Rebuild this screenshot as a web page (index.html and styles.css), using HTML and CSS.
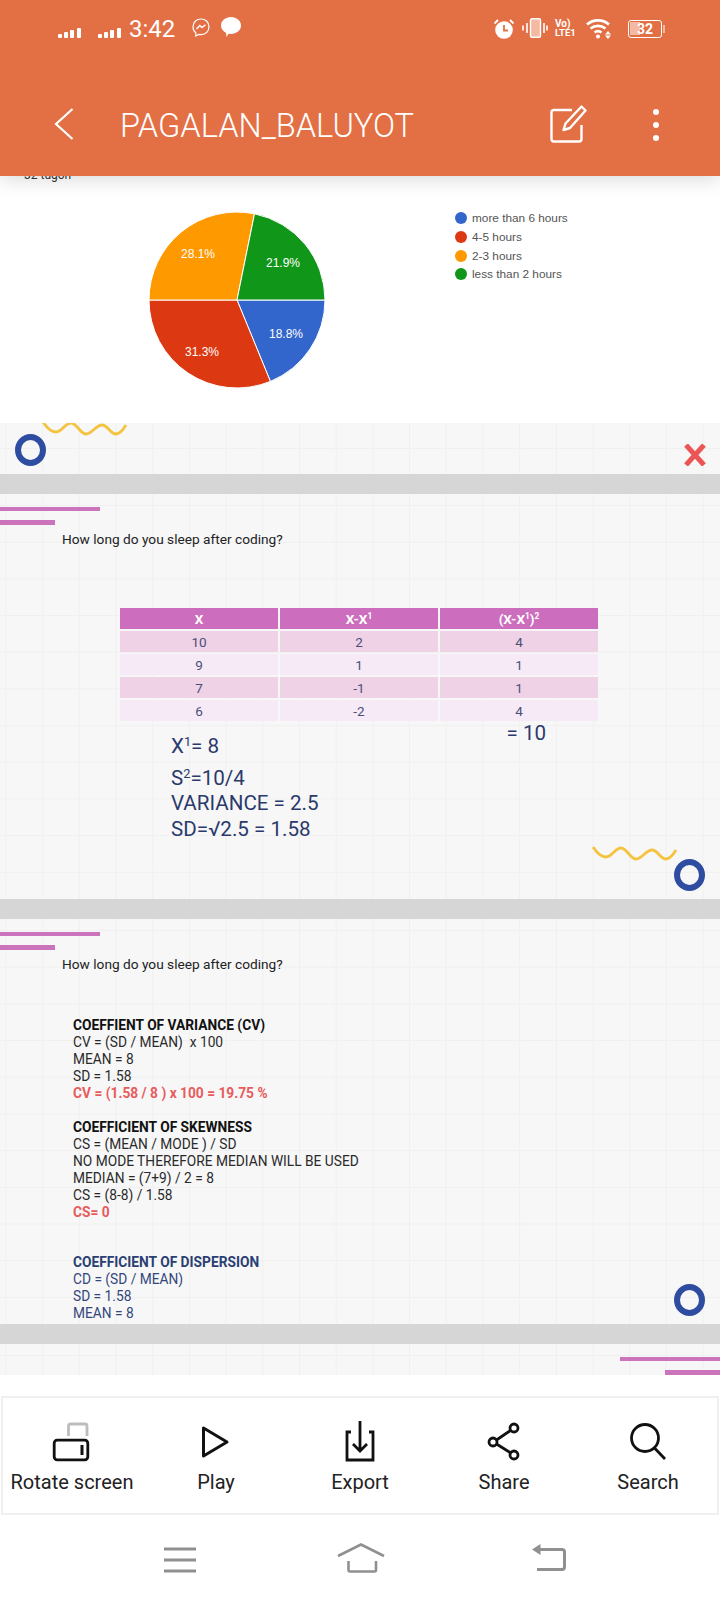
FILE: index.html
```html
<!DOCTYPE html>
<html lang="en">

<head>
    <title>PAGALAN_BALUYOT</title>
    <link rel="stylesheet" href="styles.css">
</head>

<body>
    <!-- Orange top bar -->
    <header class="topbar">
        <div class="status">
            <svg class="signal" width="24" height="10" viewBox="0 0 24 10"><rect x="0" y="6" width="4" height="4" rx="1"/><rect x="6" y="4" width="4" height="6" rx="1"/><rect x="12" y="2" width="4" height="8" rx="1"/><rect x="19" y="0" width="4" height="10" rx="1"/></svg>
            <svg class="signal signal-two" width="24" height="10" viewBox="0 0 24 10"><rect x="0" y="6" width="4" height="4" rx="1"/><rect x="6" y="4" width="4" height="6" rx="1"/><rect x="12" y="2" width="4" height="8" rx="1"/><rect x="19" y="0" width="4" height="10" rx="1"/></svg>
            <span class="clock">3:42</span>
            <svg class="messenger" width="18" height="20" viewBox="0 0 18 20" fill="none" stroke="#fff" stroke-width="1.2"><path d="M9 1 C4.300 1 1 4.400 1 8.800 C1 11.300 2 13.400 3.800 14.800 V18 L6.600 16.400 C7.400 16.600 8.200 16.700 9 16.700 C13.700 16.700 17 13.200 17 8.800 C17 4.400 13.700 1 9 1 Z"/><path d="M4.500 11 L7.800 7.500 L10 9.500 L13.500 6.800" stroke-width="1.400"/></svg>
            <svg class="bubble" width="20" height="20" viewBox="0 0 20 20"><path d="M10 0 C15.500 0 20 3.600 20 8.500 C20 13.400 15.500 17 10 17 L7.500 16.800 L5.500 20 L5 15.800 C2 14.400 0 11.800 0 8.500 C0 3.600 4.500 0 10 0 Z" fill="#fff"/></svg>

            <svg class="alarm" width="22" height="22" viewBox="0 0 22 22"><circle cx="11" cy="12" r="8.800" fill="#fff"/><path d="M11 7 V12.500 H15" fill="none" stroke="#e36f45" stroke-width="1.800"/><path d="M1.500 5.500 L5 2 M20.500 5.500 L17 2" stroke="#fff" stroke-width="1.800"/></svg>
            <svg class="vibrate" width="26" height="20" viewBox="0 0 26 20" fill="none" stroke="#fff"><rect x="8.500" y="0.700" width="10" height="18.600" rx="1.500" fill="#f3b9a3" stroke-width="1.400"/><path d="M5 5 V15 M1 7.500 V12.500 M22 5 V15 M25 7.500 V12.500" stroke-width="1.600"/></svg>
            <span class="volte"><span class="volte-top">Vo)</span><span class="volte-bottom">LTE1</span></span>
            <svg class="wifi" width="26" height="21" viewBox="0 0 26 21" fill="none" stroke="#fff" stroke-width="2.600"><path d="M1 6.500 C7 1 17 1 23 6.500"/><path d="M4.500 10.500 C9 7 15 7 19.500 10.500"/><path d="M8.500 14.500 C10.500 13 13.500 13 15.500 14.500"/><circle cx="12" cy="18.500" r="2" fill="#fff" stroke="none"/><path d="M22 13 L25 16.500 H19 Z M22 21 L19 17.500 H25 Z" fill="#fff" stroke="none"/></svg>
            <span class="battery"><span class="battery-fill"></span><span class="battery-text">32</span></span>
            <span class="battery-tip"></span>
        </div>
        <div class="titlebar">
            <svg class="back" width="20" height="32" viewBox="0 0 20 32" fill="none" stroke="#fff" stroke-width="2.200"><path d="M18.500 1 L2 16 L18.500 31"/></svg>
            <h1 class="title">PAGALAN_BALUYOT</h1>
            <svg class="edit" width="37" height="38" viewBox="0 0 37 38" fill="none" stroke="#fff" stroke-width="2.400" stroke-linejoin="round"><path d="M22 5 H4 Q1.500 5 1.500 7.500 V34 Q1.500 36.500 4 36.500 H29 Q31.500 36.500 31.500 34 V20"/><path d="M31.500 1.500 L35.500 5.500 L20 23 L13.500 25 L15.500 18.500 Z"/></svg>
            <span class="dots"><span class="dot"></span><span class="dot"></span><span class="dot"></span></span>
        </div>
    </header>

    <!-- Pie chart card -->
    <section class="chart">
        <div class="answers">32 tugon</div>
        <div class="chart-row">
            <svg class="pie" width="176" height="176" viewBox="-88 -88 176 176">
                <g stroke="#fff" stroke-width="1">
                    <path d="M0 0 L88 0 A88 88 0 0 1 33.400 81.400 Z" fill="#3366cc"/>
                    <path d="M0 0 L33.400 81.400 A88 88 0 0 1 -88 0 Z" fill="#dc3912"/>
                    <path d="M0 0 L-88 0 A88 88 0 0 1 17.500 -86.200 Z" fill="#ff9900"/>
                    <path d="M0 0 L17.500 -86.200 A88 88 0 0 1 88 0 Z" fill="#109618"/>
                </g>
                <g class="pie-labels" text-anchor="middle">
                    <text x="-39" y="-42">28.1%</text>
                    <text x="46" y="-33">21.9%</text>
                    <text x="49" y="38">18.8%</text>
                    <text x="-35" y="56">31.3%</text>
                </g>
            </svg>
            <ul class="legend">
                <li class="legend-item"><span class="swatch blue"></span>more than 6 hours</li>
                <li class="legend-item"><span class="swatch red"></span>4-5 hours</li>
                <li class="legend-item"><span class="swatch orange"></span>2-3 hours</li>
                <li class="legend-item"><span class="swatch green"></span>less than 2 hours</li>
            </ul>
        </div>
    </section>

    <!-- Slides -->
    <main class="deck">
        <section class="slide slide-cut">
            <svg class="wave wave-cut" width="86" height="15" viewBox="0 0 86 15" fill="none" stroke="#f4c33f" stroke-width="2.800"><path d="M1 1 C5 7 9 11 14 11 C20 11 23 2 29 2 C35 2 38 13 44 13 C50 13 54 4 60 4 C66 4 68 13 74 13 C78 13 81 9 84 4"/></svg>
            <span class="ring ring-left"></span>
            <svg class="cross" width="22" height="22" viewBox="0 0 22 22" stroke="#ec5555" stroke-width="5"><path d="M2 1 L20 21 M20 1 L2 21"/></svg>
        </section>
        <div class="band"></div>

        <section class="slide">
            <div class="bars"><span class="bar bar-long"></span><span class="bar bar-short"></span></div>
            <p class="question">How long do you sleep after coding?</p>
            <table class="calc">
                <tr><th>X</th><th>X-X<sup>1</sup></th><th>(X-X<sup>1</sup>)<sup>2</sup></th></tr>
                <tr><td>10</td><td>2</td><td>4</td></tr>
                <tr><td>9</td><td>1</td><td>1</td></tr>
                <tr><td>7</td><td>-1</td><td>1</td></tr>
                <tr><td>6</td><td>-2</td><td>4</td></tr>
            </table>
            <div class="results">
                <div class="result-list">
                    <div class="result result-mean">X<sup>1</sup>= 8</div>
                    <div class="result result-s">S<sup>2</sup>=10/4</div>
                    <div class="result">VARIANCE = 2.5</div>
                    <div class="result">SD=√2.5 = 1.58</div>
                </div>
                <div class="result result-sum">= 10</div>
            </div>
            <svg class="wave wave-right" width="86" height="15" viewBox="0 0 86 15" fill="none" stroke="#f4c33f" stroke-width="2.800"><path d="M1 1 C5 7 9 11 14 11 C20 11 23 2 29 2 C35 2 38 13 44 13 C50 13 54 4 60 4 C66 4 68 13 74 13 C78 13 81 9 84 4"/></svg>
            <span class="ring ring-right"></span>
        </section>
        <div class="band"></div>

        <section class="slide">
            <div class="bars"><span class="bar bar-long"></span><span class="bar bar-short"></span></div>
            <p class="question">How long do you sleep after coding?</p>
            <div class="notes">
                <div class="note">
                    <b>COEFFIENT OF VARIANCE (CV)</b>
                    <div>CV = (SD / MEAN)&nbsp; x 100</div>
                    <div>MEAN = 8</div>
                    <div>SD = 1.58</div>
                    <b class="answer">CV = (1.58 / 8 ) x 100 = 19.75 %</b>
                </div>
                <div class="note">
                    <b>COEFFICIENT OF SKEWNESS</b>
                    <div>CS = (MEAN / MODE ) / SD</div>
                    <div>NO MODE THEREFORE MEDIAN WILL BE USED</div>
                    <div>MEDIAN = (7+9) / 2 = 8</div>
                    <div>CS = (8-8) / 1.58</div>
                    <b class="answer">CS= 0</b>
                </div>
                <div class="note note-blue">
                    <b>COEFFICIENT OF DISPERSION</b>
                    <div>CD = (SD / MEAN)</div>
                    <div>SD = 1.58</div>
                    <div>MEAN = 8</div>
                </div>
            </div>
            <span class="ring ring-right"></span>
        </section>
        <div class="band"></div>

        <section class="slide slide-end">
            <div class="bars bars-right"><span class="bar bar-long"></span><span class="bar bar-short"></span></div>
        </section>
    </main>

    <!-- Bottom toolbar -->
    <nav class="toolbar">
        <div class="tool">
            <svg width="48" height="42" viewBox="0 0 48 42" fill="none" stroke="#111" stroke-width="2.800" stroke-linejoin="round"><path d="M20.500 16 V6 Q20.500 4 22.500 4 H37 Q39 4 39 6 V16" stroke="#bdbdbd"/><rect x="6.200" y="20.200" width="33.600" height="19.600" rx="3"/><path d="M34 25 V35" stroke-width="3"/></svg>
            <span class="tool-label">Rotate screen</span>
        </div>
        <div class="tool">
            <svg width="48" height="42" viewBox="0 0 48 42" fill="none" stroke="#111" stroke-width="3" stroke-linejoin="round"><path d="M11.500 8 V36 L35 22 Z"/></svg>
            <span class="tool-label">Play</span>
        </div>
        <div class="tool">
            <svg width="48" height="42" viewBox="0 0 48 42" fill="none" stroke="#111" stroke-width="2.800"><path d="M15 12 H11 V40 H37 V12 H33"/><path d="M24 1 V31 M17 24 L24 31 L31 24"/></svg>
            <span class="tool-label">Export</span>
        </div>
        <div class="tool">
            <svg width="48" height="42" viewBox="-1 0 48 42" fill="none" stroke="#111" stroke-width="2.800"><circle cx="33" cy="8" r="4"/><circle cx="12" cy="22" r="4"/><circle cx="33" cy="35" r="4"/><path d="M15.500 20 L29.500 10.500 M15.500 24 L29.500 32.800"/></svg>
            <span class="tool-label">Share</span>
        </div>
        <div class="tool">
            <svg width="48" height="42" viewBox="0 0 48 42" fill="none" stroke="#111" stroke-width="2.800"><circle cx="21" cy="18" r="13.500"/><path d="M30.500 28 L41 39"/></svg>
            <span class="tool-label">Search</span>
        </div>
    </nav>

    <!-- Android navigation -->
    <footer class="navbar">
        <svg class="nav-menu" width="34" height="26" viewBox="0 0 34 26" stroke="#909090" stroke-width="3"><path d="M1 2 H33 M1 13 H33 M1 24 H33"/></svg>
        <svg class="nav-home" width="48" height="30" viewBox="0 0 48 30" fill="none" stroke="#909090" stroke-width="2.600"><path d="M1 13 L24 1.500 L47 13"/><path d="M11.500 18 V27 Q11.500 28.500 13 28.500 H37.500 Q39 28.500 39 27 V18"/></svg>
        <svg class="nav-back" width="34" height="28" viewBox="0 0 34 28" fill="none" stroke="#909090" stroke-width="3"><path d="M6 6.500 H30 Q32.500 6.500 32.500 9 V24 Q32.500 26.500 30 26.500 H5"/><path d="M0 6.500 L8.500 1 V12 Z" fill="#909090" stroke="none"/></svg>
    </footer>
</body>

</html>
```

FILE: styles.css
```css
/* Page */
body {
    margin: 0;
    width: 720px;
    height: 1600px;
    overflow: hidden;
    background-color: #ffffff;
    font-family: Roboto, sans-serif;
}

/* Top bar */
.topbar {
    position: relative;
    z-index: 2;
    height: 176px;
    background-color: #e36f45;
    box-shadow: 0 4px 18px rgba(0, 0, 0, 0.14);
}

.status {
    display: flex;
    align-items: center;
    height: 56px;
    padding-left: 58px;
    color: #ffffff;
}

.signal {
    fill: #ffffff;
    margin-top: 10px;
}

.signal-two {
    margin-left: 16px;
}

.clock {
    margin-left: 7px;
    margin-top: 2px;
    font-size: 24px;
    line-height: 28px;
    width: 47px;
}

.messenger {
    margin-left: 16px;
}

.bubble {
    margin-left: 11px;
    margin-top: -2px;
}

.alarm {
    margin-left: 252px;
    margin-top: 1px;
}

.vibrate {
    margin-left: 7px;
}

.volte {
    display: flex;
    flex-direction: column;
    width: 24px;
    margin-left: 7px;
    font-weight: 700;
    line-height: 9px;
}

.volte-top {
    font-size: 10px;
}

.volte-bottom {
    font-size: 9.500px;
}

.wifi {
    margin-left: 7px;
    margin-top: 1px;
}

.battery {
    display: flex;
    align-items: center;
    position: relative;
    box-sizing: border-box;
    width: 34px;
    height: 18px;
    margin-left: 16px;
    margin-top: 1px;
    border: 1.500px solid #ffffff;
    border-radius: 3px;
}

.battery-fill {
    width: 10px;
    height: 13px;
    margin-left: 1px;
    background-color: #f3b9a3;
}

.battery-text {
    position: absolute;
    left: 0;
    right: 0;
    text-align: center;
    font-size: 14px;
    font-weight: 700;
}

.battery-tip {
    width: 2px;
    height: 8px;
    margin-top: 1px;
    margin-left: 1px;
    background-color: #f3b9a3;
}

.titlebar {
    display: flex;
    align-items: center;
    height: 96px;
    margin-top: 20px;
    padding-left: 54px;
}

.title {
    width: 430px;
    margin: 4px 0 0 46px;
    color: #ffffff;
    font-size: 32.600px;
    font-weight: 300;
    line-height: 40px;
    white-space: nowrap;
}

.edit {
    margin-top: 0;
}

.dots {
    display: flex;
    flex-direction: column;
    gap: 7px;
    margin-left: 66px;
    margin-top: 2px;
}

.dot {
    width: 6px;
    height: 6px;
    border-radius: 50%;
    background-color: #ffffff;
}

/* Chart card */
.chart {
    height: 247px;
    overflow: hidden;
    background-color: #ffffff;
}

.answers {
    height: 14px;
    margin-top: -8px;
    padding-left: 24px;
    color: #333333;
    font-size: 12px;
    line-height: 14px;
}

.chart-row {
    display: flex;
    padding: 30px 0 0 149px;
}

.pie-labels {
    fill: #ffffff;
    font-family: "Liberation Sans", Arial, sans-serif;
    font-size: 12px;
}

.legend {
    list-style: none;
    margin: -3px 0 0 130px;
    padding: 0;
    color: #555555;
    font-family: "Liberation Sans", Arial, sans-serif;
    font-size: 11.800px;
}

.legend-item {
    display: flex;
    align-items: center;
    height: 18.700px;
}

.swatch {
    width: 12px;
    height: 12px;
    margin-right: 5px;
    border-radius: 50%;
}

.blue {
    background-color: #3366cc;
}

.red {
    background-color: #dc3912;
}

.orange {
    background-color: #ff9900;
}

.green {
    background-color: #109618;
}

/* Slides */
.deck {
    height: 952px;
}

.slide {
    position: relative;
    box-sizing: border-box;
    height: 405px;
    overflow: hidden;
    background-color: #f7f7f8;
    background-image:
        linear-gradient(to right, #f0f0f1 1px, transparent 1px),
        linear-gradient(to bottom, #f0f0f1 1px, transparent 1px);
    background-size: 36.700px 36.700px;
    background-position: 5.500px 11px;
}

.slide-cut {
    height: 51px;
    background-position: 5.500px 25px;
}

.slide-end {
    height: 31px;
}

.band {
    height: 20px;
    background-color: #d6d6d6;
}

.bars {
    display: flex;
    flex-direction: column;
    gap: 9px;
    padding-top: 13px;
}

.bars-right {
    align-items: flex-end;
}

.bar {
    height: 4px;
    background-color: #cb74bc;
}

.bar-long {
    width: 100px;
}

.bar-short {
    width: 55px;
    height: 5px;
}

.question {
    margin: 0 0 0 62px;
    padding-top: 6px;
    color: #222222;
    font-size: 13.700px;
    line-height: 17px;
}

/* Decorations sitting on the slide */
.ring {
    position: absolute;
    box-sizing: border-box;
    width: 31px;
    height: 32px;
    border: 6px solid #2f4da0;
    border-radius: 50%;
}

.ring-left {
    left: 15px;
    top: 11px;
}

.ring-right {
    left: 674px;
    top: 365px;
}

.wave {
    position: absolute;
}

.wave-cut {
    left: 42px;
    top: -2px;
}

.wave-right {
    left: 592px;
    top: 352px;
}

.cross {
    position: absolute;
    left: 684px;
    top: 21px;
}

/* Variance table */
.calc {
    width: 482px;
    margin: 58px 0 0 118px;
    border-spacing: 2px;
    color: #4a4f78;
    font-size: 13.500px;
    table-layout: fixed;
}

.calc th,
.calc td {
    height: 21px;
    padding: 0;
    text-align: center;
}

.calc th {
    background-color: #cd6dbd;
    color: #ffffff;
    font-weight: 700;
}

.calc tr:nth-child(even) td {
    background-color: #efd2e6;
}

.calc tr:nth-child(odd) td {
    background-color: #f6eaf6;
}

sup {
    font-size: 0.62em;
    line-height: 0;
    vertical-align: 0.55em;
}

.results {
    display: flex;
    padding-left: 171px;
    color: #2b3a6b;
}

.result {
    font-size: 20.600px;
    line-height: 25.500px;
}

.result-mean {
    margin-top: 11px;
}

.result-s {
    margin-top: 6px;
}

.result-sum {
    margin-left: 188px;
    margin-top: -2px;
}

/* Notes slide */
.notes {
    margin: 44px 0 0 73px;
    color: #2a2a2a;
    font-size: 13.750px;
    line-height: 17px;
}

.note {
    margin-bottom: 17px;
}

.note b {
    display: block;
    color: #111111;
    font-weight: 700;
}

.note b.answer {
    color: #e85b5b;
}

.note-blue {
    margin-top: 33px;
    color: #34477c;
}

.note-blue b {
    color: #2b3f73;
}

/* Bottom toolbar */
.toolbar {
    display: grid;
    grid-template-columns: repeat(5, 144px);
    justify-content: center;
    box-sizing: border-box;
    height: 119px;
    margin: 21px 1px 0;
    padding-top: 22px;
    border: 2px solid #f0f0f0;
}

.tool {
    display: flex;
    flex-direction: column;
    align-items: center;
}

.tool-label {
    margin-top: 9px;
    color: #222222;
    font-size: 20px;
    line-height: 22px;
    white-space: nowrap;
}

/* Android nav */
.navbar {
    display: flex;
    align-items: flex-start;
    padding: 28px 0 0 163px;
}

.nav-menu {
    margin-top: 4px;
}

.nav-home {
    margin-left: 140px;
}

.nav-back {
    margin-left: 147px;
}
```
